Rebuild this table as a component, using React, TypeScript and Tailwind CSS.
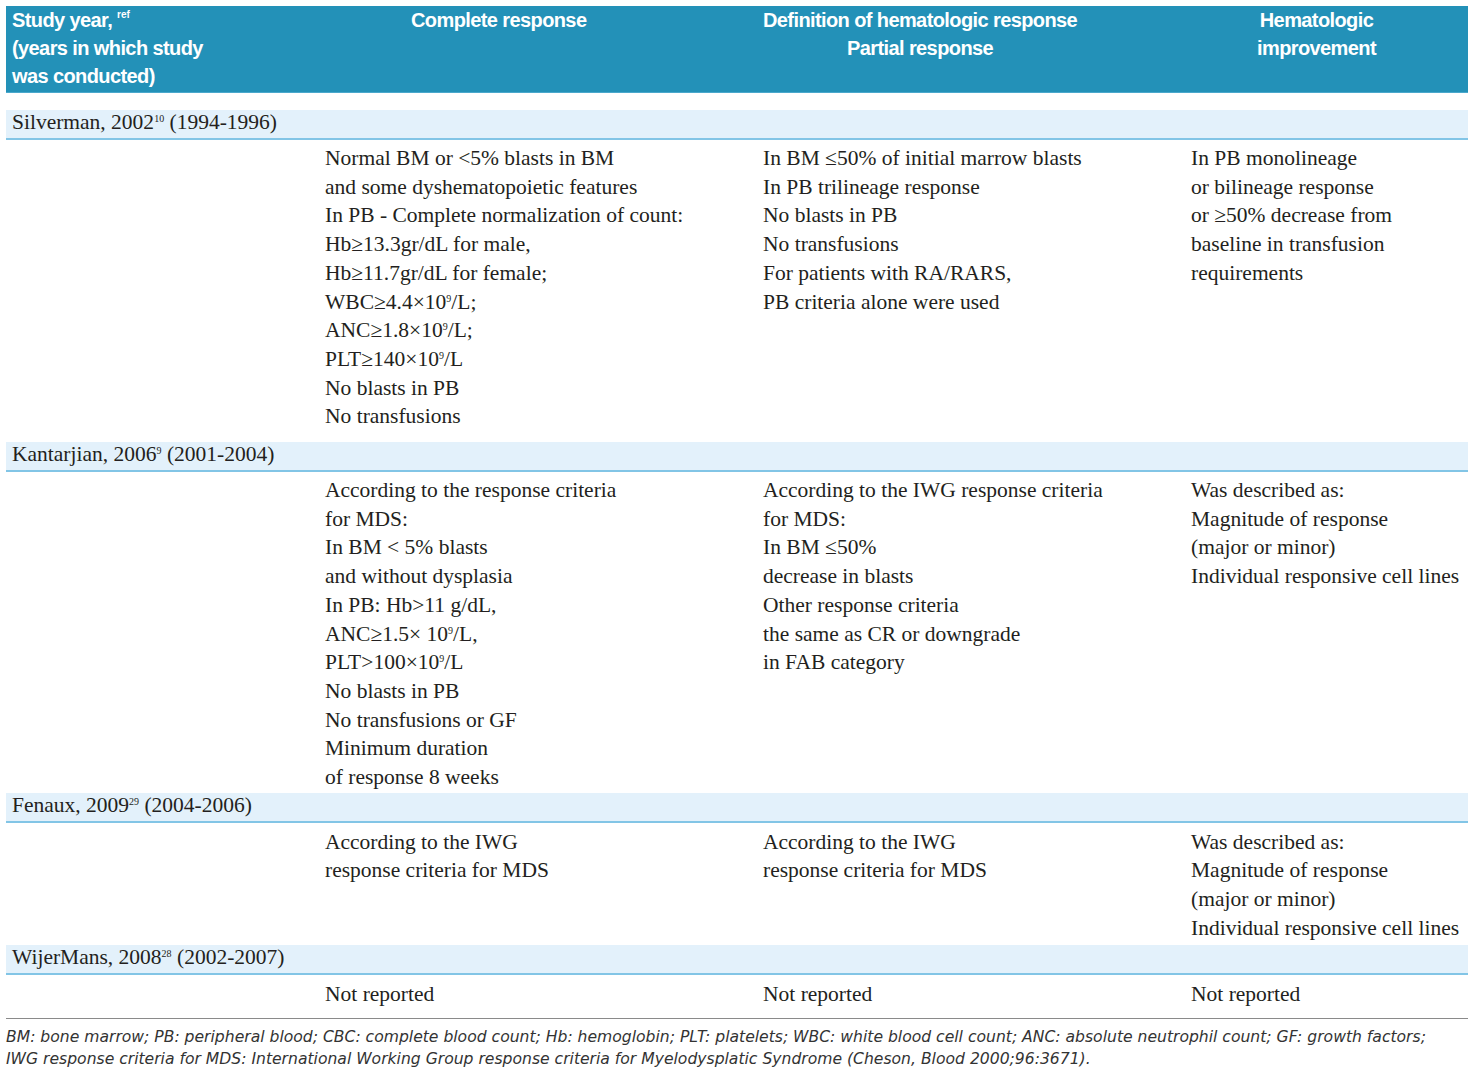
import React from 'react';

type Line = React.ReactNode;

const Sup = ({ children }: { children: React.ReactNode }) => (
  <sup className="text-[10px] -top-[0.7em]">{children}</sup>
);

const Ten9 = () => (
  <>
    10<Sup>9</Sup>
  </>
);

const Cell = ({ lines }: { lines: Line[] }) => (
  <div className="pl-[6px]">
    {lines.map((l, i) => (
      <div key={i} className="whitespace-nowrap">
        {l}
      </div>
    ))}
  </div>
);

const Band = ({ children }: { children: React.ReactNode }) => (
  <div className="h-[30px] bg-[#e3f1fb] border-b-2 border-[#82c5e6] pl-[6px] pb-[4px] flex items-center leading-[24px]">
    <span>{children}</span>
  </div>
);

const Row = ({ cells, pad }: { cells: Line[][]; pad: string }) => (
  <div className={`grid grid-cols-[313px_438px_428px_283px] ${pad}`}>
    <div />
    {cells.map((c, i) => (
      <Cell key={i} lines={c} />
    ))}
  </div>
);

const iwgDescribed: Line[] = [
  'Was described as:',
  'Magnitude of response',
  '(major or minor)',
  'Individual responsive cell lines',
];

const App = () => {
  return (
    <div className="w-[1476px] min-h-[1078px] bg-white pl-[6px] pr-[8px] pt-[6px] text-[#231f20]">
      {/* Header */}
      <div className="grid grid-cols-[313px_438px_428px_283px] h-[87px] bg-[#2391b8] border-b border-[#4aa8cc] text-white font-bold text-[20px] tracking-[-0.6px] leading-[28px] [font-family:'Liberation_Sans',Arial,sans-serif]">
        <div className="pl-[6px]">
          <div>
            Study year, <sup className="text-[10px] -top-[0.9em] tracking-normal">ref</sup>
          </div>
          <div>(years in which study</div>
          <div>was conducted)</div>
        </div>
        <div className="pl-[92px]">Complete response</div>
        <div className="pl-[6px]">
          <div className="inline-block text-center">
            <div>Definition of hematologic response</div>
            <div>Partial response</div>
          </div>
        </div>
        <div className="pl-[72px]">
          <div className="inline-block text-center">
            <div>Hematologic</div>
            <div>improvement</div>
          </div>
        </div>
      </div>

      {/* Body */}
      <div className="mt-[17px] text-[21.5px] leading-[28.7px] [font-family:'Liberation_Serif','Times_New_Roman',serif]">
        <Band>
          Silverman, 2002<Sup>10</Sup> (1994-1996)
        </Band>
        <Row
          pad="pt-[4px] pb-[11px]"
          cells={[
            [
              'Normal BM or <5% blasts in BM',
              'and some dyshematopoietic features',
              'In PB - Complete normalization of count:',
              'Hb≥13.3gr/dL for male,',
              'Hb≥11.7gr/dL for female;',
              <>WBC≥4.4×<Ten9 />/L;</>,
              <>ANC≥1.8×<Ten9 />/L;</>,
              <>PLT≥140×<Ten9 />/L</>,
              'No blasts in PB',
              'No transfusions',
            ],
            [
              'In BM ≤50% of initial marrow blasts',
              'In PB trilineage response',
              'No blasts in PB',
              'No transfusions',
              'For patients with RA/RARS,',
              'PB criteria alone were used',
            ],
            [
              'In PB monolineage',
              'or bilineage response',
              'or ≥50% decrease from',
              'baseline in transfusion',
              'requirements',
            ],
          ]}
        />

        <Band>
          Kantarjian, 2006<Sup>9</Sup> (2001-2004)
        </Band>
        <Row
          pad="pt-[4px] pb-[1px]"
          cells={[
            [
              'According to the response criteria',
              'for MDS:',
              'In BM < 5% blasts',
              'and without dysplasia',
              'In PB: Hb>11 g/dL,',
              <>ANC≥1.5× <Ten9 />/L,</>,
              <>PLT&gt;100×<Ten9 />/L</>,
              'No blasts in PB',
              'No transfusions or GF',
              'Minimum duration',
              'of response 8 weeks',
            ],
            [
              'According to the IWG response criteria',
              'for MDS:',
              'In BM ≤50%',
              'decrease in blasts',
              'Other response criteria',
              'the same as CR or downgrade',
              'in FAB category',
            ],
            iwgDescribed,
          ]}
        />

        <Band>
          Fenaux, 2009<Sup>29</Sup> (2004-2006)
        </Band>
        <Row
          pad="pt-[5px] pb-[2px]"
          cells={[
            ['According to the IWG', 'response criteria for MDS'],
            ['According to the IWG', 'response criteria for MDS'],
            iwgDescribed,
          ]}
        />

        <Band>
          WijerMans, 2008<Sup>28</Sup> (2002-2007)
        </Band>
        <Row pad="pt-[5px] pb-[10px]" cells={[['Not reported'], ['Not reported'], ['Not reported']]} />
      </div>

      {/* Footnote */}
      <div className="border-t border-[#8a8a8a] pt-[7px] italic text-[15.6px] leading-[22px] text-[#333333] [font-family:'DejaVu_Sans',sans-serif]">
        <div className="whitespace-nowrap">
          BM: bone marrow; PB: peripheral blood; CBC: complete blood count; Hb: hemoglobin; PLT: platelets; WBC: white blood cell count; ANC: absolute neutrophil count; GF: growth factors;
        </div>
        <div className="whitespace-nowrap">
          IWG response criteria for MDS: International Working Group response criteria for Myelodysplatic Syndrome (Cheson, Blood 2000;96:3671).
        </div>
      </div>
    </div>
  );
};

export default App;
